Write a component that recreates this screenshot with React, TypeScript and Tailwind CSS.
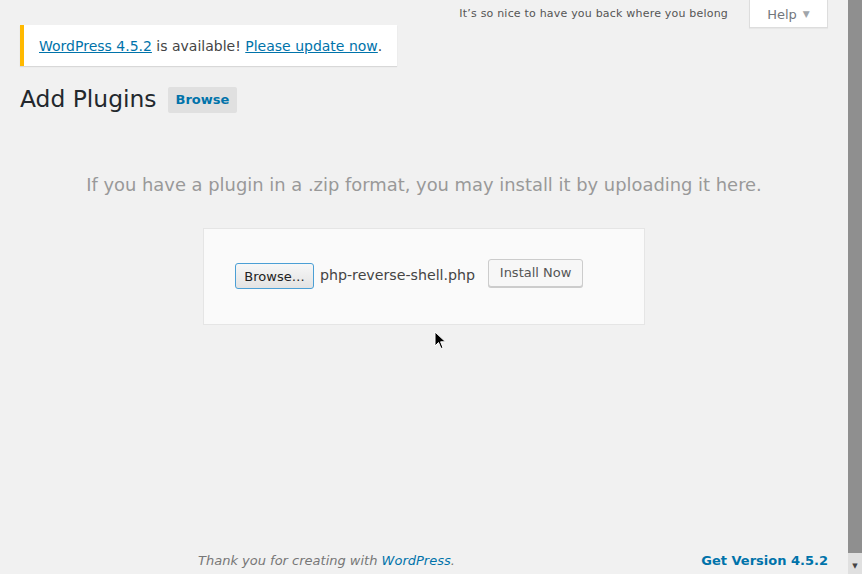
import React from "react";

const font = { fontFamily: '"DejaVu Sans", sans-serif' };

function Cursor() {
  return (
    <svg className="pointer-events-none absolute left-[434px] top-[331px]" width="14" height="20" viewBox="0 0 14 20">
      <path d="M1 1 L1 15 L4.5 11.5 L7 17.5 L9 16.7 L6.6 10.8 L11.5 10.8 Z" fill="#000" stroke="#fff" strokeWidth="1" />
    </svg>
  );
}

export default function App() {
  return (
    <div className="relative flex h-[574px] w-[862px] overflow-hidden bg-[#f1f1f1] text-[#444]" style={font}>
      <div className="flex w-[848px] flex-col">
        {/* screen meta */}
        <div className="flex h-[25px] items-start justify-end pr-[20px]">
          <span className="mr-[21px] mt-[6px] text-[11px] tracking-[0.2px] text-[#555]">
            It’s so nice to have you back where you belong
          </span>
          <button className="flex h-[28px] w-[79px] items-center justify-center gap-[6px] border border-t-0 border-[#ddd] bg-white pt-[2px] text-[13px] text-[#72777c] shadow-[0_1px_1px_rgba(0,0,0,0.04)]">
            Help
            <span className="text-[9px] text-[#a0a5aa]">▼</span>
          </button>
        </div>

        <div className="flex flex-1 flex-col px-[20px]">
          {/* update nag */}
          <div className="mb-[19px] flex h-[41px] w-[377px] items-center border-l-4 border-[#ffb900] bg-white pl-[15px] pt-[2px] text-[14px] shadow-[0_1px_1px_rgba(0,0,0,0.1)]">
            <a className="text-[#0073aa] underline">WordPress 4.5.2</a>
            <span>&nbsp;is available!&nbsp;</span>
            <a className="text-[#0073aa] underline">Please update now</a>
            <span>.</span>
          </div>

          {/* title */}
          <div className="flex items-center gap-[11px]">
            <h1 className="text-[23.4px] leading-[29px] text-[#23282d]">Add Plugins</h1>
            <span className="mt-[1px] rounded-[2px] bg-[#e0e0e0] px-[8px] py-[3px] text-[13px] font-bold text-[#0073aa]">Browse</span>
          </div>

          {/* upload */}
          <p className="mt-[58px] text-center text-[17.9px] leading-[26px] text-[#999]">
            If you have a plugin in a .zip format, you may install it by uploading it here.
          </p>
          <div className="mx-auto mt-[30px] flex h-[97px] w-[442px] items-start border border-[#e5e5e5] bg-[#fafafa] pl-[31px] pt-[30px]">
            <button className="mt-[4px] h-[26px] w-[79px] rounded-[3px] border border-[#4b9fd5] bg-gradient-to-b from-[#f7f7f7] to-[#e3e3e3] pt-[1px] text-[13px] text-[#222]">
              Browse…
            </button>
            <span className="ml-[6px] mt-[6px] text-[14.2px] text-[#444]">php-reverse-shell.php</span>
            <button className="ml-[13px] h-[28px] w-[95px] rounded-[3px] border border-[#ccc] bg-[#f7f7f7] text-[13px] text-[#555] shadow-[0_1px_0_#ccc]">
              Install Now
            </button>
          </div>

          <div className="flex-1" />

          {/* footer */}
          <div className="flex items-center justify-between pb-[4px] pl-[178px] text-[13px]">
            <span className="italic text-[#777]">
              Thank you for creating with <a className="text-[#0073aa]">WordPress</a>.
            </span>
            <span className="font-bold text-[#0073aa]">Get Version 4.5.2</span>
          </div>
        </div>
      </div>

      {/* scrollbar */}
      <div className="flex w-[14px] flex-col bg-[#e0e0e0]">
        <div className="h-[553px] bg-[#8f8f8f]" />
        <div className="flex flex-1 items-center justify-center pt-[6px] text-[7px] text-[#444]">▼</div>
      </div>

      <Cursor />
    </div>
  );
}
